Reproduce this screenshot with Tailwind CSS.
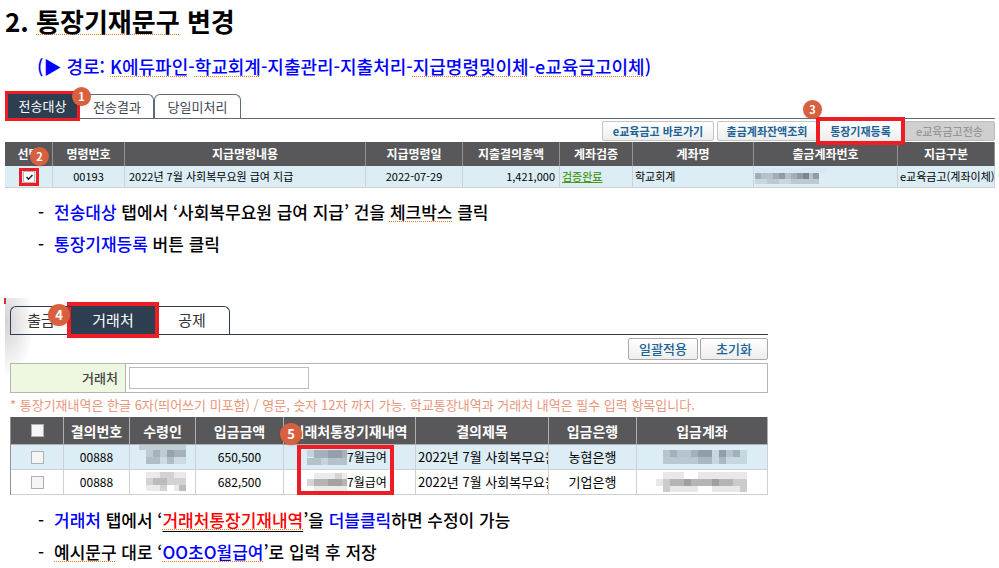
<!DOCTYPE html>
<html lang="ko">
<head>
  <meta charset="UTF-8">
  <meta name="viewport" content="width=device-width, initial-scale=1">
  <title>통장기재문구 변경</title>
  <script src="https://cdn.jsdelivr.net/npm/@tailwindcss/browser@4"></script>
</head>
<body class="bg-white text-black font-['Noto_Sans_CJK_KR','Liberation_Sans',sans-serif]">
  <main class="pl-[5px] pr-1">
    <h1 class="text-[26px] leading-[42px] font-bold">2. <span class="underline decoration-dotted decoration-1 underline-offset-2 decoration-[#e87722] [text-decoration-skip-ink:none]">통장기재문구</span> 변경</h1>
    <p class="pl-8 text-lg leading-[48px] font-medium text-[#0000ff] whitespace-nowrap">(▶ 경로: <span class="underline decoration-dotted decoration-1 underline-offset-2 decoration-[#e87722] [text-decoration-skip-ink:none]">K에듀파인</span>-<span class="underline decoration-dotted decoration-1 underline-offset-2 decoration-[#e87722] [text-decoration-skip-ink:none]">학교회계</span>-지출관리-지출처리-<span class="underline decoration-dotted decoration-1 underline-offset-2 decoration-[#e87722] [text-decoration-skip-ink:none]">지급명령및이체</span>-<span class="underline decoration-dotted decoration-1 underline-offset-2 decoration-[#e87722] [text-decoration-skip-ink:none]">e교육금고이체</span>)</p>

    <!-- Transfer target -->
    <section>
      <nav class="flex pt-1 pl-[3px] border-b border-[#5b6b7b] text-[13px] text-[#3f4650]">
        <button class="relative z-10 w-[69px] h-6 bg-[#2c3e50] text-white outline-3 outline-[#ee1c25]">전송대상
          <span class="absolute -top-[7px] -right-[14px] flex items-center justify-center size-[19px] rounded-full bg-[#d9603f] shadow text-[11px] font-bold text-white">1</span>
        </button>
        <button class="w-[77px] h-6 pl-1 border-t border-r border-[#5b6b7b] rounded-tr-md">전송결과</button>
        <button class="w-[87px] h-6 border-t border-x border-[#5b6b7b] rounded-t-md">당일미처리</button>
      </nav>

      <div class="flex justify-end gap-[3px] pt-0.5 pb-px text-[11px] font-bold text-[#1b6396] whitespace-nowrap">
        <button class="w-[112px] h-5 border border-[#c4c4c4] rounded-xs bg-linear-to-b from-white to-[#ededed]">e교육금고 바로가기</button>
        <button class="w-[100px] h-5 border border-[#c4c4c4] rounded-xs bg-linear-to-b from-white to-[#ededed]">출금계좌잔액조회</button>
        <button class="relative z-10 w-[81px] h-5 bg-linear-to-b from-white to-[#ededed] outline-4 outline-[#ee1c25]">통장기재등록
          <span class="absolute -top-[21px] -left-[17px] flex items-center justify-center size-[19px] rounded-full bg-[#d9603f] shadow text-[11px] font-bold text-white">3</span>
        </button>
        <button disabled class="w-[91px] h-5 border border-[#bdbdbd] rounded-xs bg-[#cfcfcf] font-medium text-[#969696]">e교육금고전송</button>
      </div>

      <table class="w-full table-fixed border-separate border-spacing-0 text-[11px] whitespace-nowrap">
        <colgroup>
          <col class="w-12"><col class="w-[72px]"><col><col class="w-[97px]"><col class="w-[97px]"><col class="w-[73px]"><col class="w-[121px]"><col class="w-36"><col class="w-[97px]">
        </colgroup>
        <thead class="bg-[#58585a] text-xs text-white">
          <tr class="h-6">
            <th class="relative border-r border-[#929294]">선택
              <span class="absolute top-[5px] right-[3px] flex items-center justify-center size-[19px] rounded-full bg-[#d9603f] shadow text-[11px] font-bold text-white">2</span>
            </th>
            <th class="border-r border-[#929294]">명령번호</th>
            <th class="border-r border-[#929294]">지급명령내용</th>
            <th class="border-r border-[#929294]">지급명령일</th>
            <th class="border-r border-[#929294]">지출결의총액</th>
            <th class="border-r border-[#929294]">계좌검증</th>
            <th class="border-r border-[#929294]">계좌명</th>
            <th class="border-r border-[#929294]">출금계좌번호</th>
            <th class="border-r border-[#929294]">지급구분</th>
          </tr>
        </thead>
        <tbody class="bg-[#dcedf6]">
          <tr class="h-[22px]">
            <td class="border-r border-b border-[#cfd0d6]">
              <label class="relative block w-5 h-[18px] mx-auto border-3 border-[#ee1c25] bg-[#dcedf6]">
                <input type="checkbox" checked aria-label="선택" class="block appearance-none size-3 mx-auto bg-white border border-[#b5b5b5]">
                <svg class="absolute top-[3px] left-[4px]" width="7" height="7" viewBox="0 0 7 7" fill="none" stroke="#222" stroke-width="1.5"><path d="M0.5 3 L2.5 5.2 L6.5 1"/></svg>
              </label>
            </td>
            <td class="border-r border-b border-[#cfd0d6] text-center">00193</td>
            <td class="border-r border-b border-[#cfd0d6] pl-1">2022년 7월 사회복무요원 급여 지급</td>
            <td class="border-r border-b border-[#cfd0d6] text-center">2022-07-29</td>
            <td class="border-r border-b border-[#cfd0d6] pr-1 text-right">1,421,000</td>
            <td class="border-r border-b border-[#cfd0d6] pl-0.5"><a href="#" class="font-medium text-[#4b9a1e] underline">검증완료</a></td>
            <td class="border-r border-b border-[#cfd0d6] pl-0.5">학교회계</td>
            <td class="border-r border-b border-[#cfd0d6] pl-px">
              <svg width="72" height="17" class="block" shape-rendering="crispEdges">
                <path fill="#d8e8f2" d="M0 0h72v5h-72z"/>
                <path fill="#a3adb5" d="M0 5h6v6h-6zM18 5h6v6h-6zM36 5h6v6h-6z"/>
                <path fill="#b5c1ca" d="M6 5h12v6h-12zM30 5h6v6h-6zM54 5h4v6h-4z"/>
                <path fill="#929ba3" d="M24 5h6v6h-6zM42 5h6v6h-6zM58 5h6v6h-6z"/>
                <path fill="#7c868f" d="M48 5h6v6h-6z"/>
                <path fill="#cbd7df" d="M0 11h12v5h-12zM24 11h12v5h-12z"/>
                <path fill="#bcc9d2" d="M12 11h12v5h-12zM36 11h28v5h-28z"/>
              </svg>
            </td>
            <td class="border-r border-b border-[#cfd0d6] pl-0.5 overflow-hidden">e교육금고(계좌이체)</td>
          </tr>
        </tbody>
      </table>
    </section>

    <ul class="pt-2 pl-[33px] text-[17px] leading-8 font-medium">
      <li class="flex"><span class="w-4">-</span><p><span class="text-[#0000ff]">전송대상</span> 탭에서 ‘사회복무요원 급여 지급’ 건을 <span class="underline decoration-dotted decoration-1 underline-offset-2 decoration-[#e87722] [text-decoration-skip-ink:none]">체크박스</span> 클릭</p></li>
      <li class="flex"><span class="w-4">-</span><p><span class="text-[#0000ff]">통장기재등록</span> 버튼 클릭</p></li>
    </ul>

    <!-- Payee -->
    <section class="relative mt-[38px] pt-2 pl-[5px] max-w-[763px] bg-[radial-gradient(ellipse_30px_56px_at_0px_24px,#d2d2d2,transparent)]">
      <span class="absolute top-0 -left-px w-0.5 h-1.5 bg-[#d9302c]"></span>
      <nav class="flex border-b border-[#2c3e50] text-[15px] text-[#333]">
        <button class="relative z-20 w-[61px] h-7 border-t border-l border-[#2c3e50] rounded-tl-md">출금
          <span class="absolute -top-[3px] right-[1px] flex items-center justify-center size-[22px] rounded-full bg-[#d9603f] shadow text-[13px] font-bold text-white">4</span>
        </button>
        <button class="relative z-10 w-[84px] h-7 bg-[#2c3e50] text-white outline-4 outline-[#ee1c25]">거래처</button>
        <button class="w-[75px] h-7 border-t border-r border-[#2c3e50] rounded-tr-md">공제</button>
      </nav>

      <div class="flex justify-end gap-0.5 pt-[3px] text-[13px] font-medium text-[#1b6396]">
        <button class="w-[70px] h-[22px] border border-[#a9a9a9] rounded-xs bg-linear-to-b from-white to-[#ededed]">일괄적용</button>
        <button class="w-[68px] h-[22px] border border-[#a9a9a9] rounded-xs bg-linear-to-b from-white to-[#ededed]">초기화</button>
      </div>

      <div class="flex mt-[3px] h-[30px] border border-[#b4b4b4]">
        <label for="payee" class="flex items-center justify-end w-[115px] pr-[7px] border-r border-[#b4b4b4] bg-[#eef7e0] text-[13px] font-medium text-[#444]">거래처</label>
        <input id="payee" type="text" class="w-[180px] h-[22px] mt-[3px] ml-[3px] bg-white border border-[#bdbdbd] text-[13px]">
      </div>

      <p class="text-[13px] leading-6 text-[#e8967c] whitespace-nowrap">* 통장기재내역은 한글 6자(띄어쓰기 미포함) / 영문, 숫자 12자 까지 가능. 학교통장내역과 거래처 내역은 필수 입력 항목입니다.</p>

      <table class="w-full table-fixed border-separate border-spacing-0 border-l border-[#929294] text-[13px] whitespace-nowrap">
        <colgroup>
          <col class="w-[53px]"><col class="w-[66px]"><col class="w-[66px]"><col class="w-[88px]"><col class="w-[132px]"><col><col class="w-[88px]"><col class="w-[131px]">
        </colgroup>
        <thead class="bg-[#58585a] text-sm leading-5 text-white">
          <tr class="h-7">
            <th class="border-r border-b border-[#b0b0b2]"><input type="checkbox" aria-label="전체 선택" class="block appearance-none size-[13px] mx-auto bg-[#f5f5f5] border border-[#b0b0b0]"></th>
            <th class="border-r border-b border-[#b0b0b2]">결의번호</th>
            <th class="border-r border-b border-[#b0b0b2]">수령인</th>
            <th class="border-r border-b border-[#b0b0b2]">입금금액</th>
            <th class="relative border-r border-b border-[#b0b0b2]">거래처통장기재내역
              <span class="absolute top-[6px] -left-[4px] flex items-center justify-center size-[22px] rounded-full bg-[#d9603f] shadow text-[13px] font-bold text-white">5</span>
            </th>
            <th class="border-r border-b border-[#b0b0b2]">결의제목</th>
            <th class="border-r border-b border-[#b0b0b2]">입금은행</th>
            <th class="border-r border-b border-[#b0b0b2]">입금계좌</th>
          </tr>
        </thead>
        <tbody>
          <tr class="h-[25px] bg-[#dcedf6]">
            <td class="border-r border-b border-[#cfd0d6]"><input type="checkbox" aria-label="선택" class="block appearance-none size-[13px] mx-auto bg-[#f5f5f5] border border-[#b0b0b0]"></td>
            <td class="border-r border-b border-[#cfd0d6] text-center text-xs">00888</td>
            <td class="border-r border-b border-[#cfd0d6]">
              <svg width="47" height="24" class="block mx-auto" shape-rendering="crispEdges">
                <path fill="#c1cdd5" d="M0 0h47v5h-47z"/>
                <path fill="#bdcbd5" d="M7 5h7v7h-7zM21 5h7v7h-7z"/>
                <path fill="#a5b2bc" d="M14 5h7v7h-7zM35 5h12v7h-12z"/>
                <path fill="#96a3ad" d="M28 5h7v7h-7z"/>
                <path fill="#b0bdc7" d="M7 12h14v7h-14zM28 12h7v7h-7z"/>
                <path fill="#cbdae4" d="M21 12h7v7h-7zM35 12h12v7h-12z"/>
              </svg>
            </td>
            <td class="border-r border-b border-[#cfd0d6] text-center text-xs">650,500</td>
            <td class="relative border-r border-b border-[#cfd0d6] pl-[23px]">
              <div class="flex items-center text-xs">
                <svg width="40" height="15" shape-rendering="crispEdges">
                  <path fill="#c4d3dd" d="M0 0h7v7h-7zM14 8h7v7h-7z"/>
                  <path fill="#a5b1ba" d="M7 0h14v8h-14zM35 0h5v8h-5z"/>
                  <path fill="#939fa9" d="M21 0h14v8h-14z"/>
                  <path fill="#b4c2cc" d="M0 8h14v7h-14zM21 8h19v7h-19z"/>
                </svg>7월급여
              </div>
              <span class="absolute top-0 left-[13px] w-[97px] h-[50px] border-4 border-[#ee1c25]"></span>
            </td>
            <td class="border-r border-b border-[#cfd0d6] pl-0.5 overflow-hidden">2022년 7월 사회복무요원</td>
            <td class="border-r border-b border-[#cfd0d6] text-center">농협은행</td>
            <td class="border-r border-b border-[#cfd0d6]">
              <svg width="92" height="15" class="block mx-auto" shape-rendering="crispEdges">
                <path fill="#b4c3cd" d="M7 0h7v7h-7zM21 0h14v7h-14zM70 0h7v7h-7z"/>
                <path fill="#a2b0ba" d="M14 0h7v7h-7zM35 0h7v7h-7zM77 0h7v7h-7z"/>
                <path fill="#919daa" d="M42 0h14v7h-14zM63 0h7v7h-7z"/>
                <path fill="#c7d7e1" d="M56 0h7v7h-7zM84 0h7v7h-7zM56 7h7v7h-7zM70 7h21v7h-21z"/>
                <path fill="#b9c9d3" d="M7 7h35v7h-35z"/>
                <path fill="#a8b7c1" d="M42 7h14v7h-14zM63 7h7v7h-7z"/>
              </svg>
            </td>
          </tr>
          <tr class="h-[25px]">
            <td class="border-r border-b border-[#cfd0d6]"><input type="checkbox" aria-label="선택" class="block appearance-none size-[13px] mx-auto bg-[#f5f5f5] border border-[#b0b0b0]"></td>
            <td class="border-r border-b border-[#cfd0d6] text-center text-xs">00888</td>
            <td class="border-r border-b border-[#cfd0d6]">
              <svg width="47" height="20" class="block mx-auto" shape-rendering="crispEdges">
                <path fill="#eaeaea" d="M7 0h14v6h-14zM35 0h12v6h-12zM7 13h14v6h-14zM35 13h5v6h-5z"/>
                <path fill="#d2d2d2" d="M21 0h14v6h-14zM7 6h7v7h-7zM28 6h19v7h-19zM21 13h7v6h-7z"/>
                <path fill="#bcbcbc" d="M14 6h14v7h-14zM40 13h7v6h-7z"/>
              </svg>
            </td>
            <td class="border-r border-b border-[#cfd0d6] text-center text-xs">682,500</td>
            <td class="border-r border-b border-[#cfd0d6] pl-[23px]">
              <div class="flex items-center text-xs">
                <svg width="40" height="19" shape-rendering="crispEdges">
                  <path fill="#ebebeb" d="M7 0h33v6h-33zM7 13h33v5h-33z"/>
                  <path fill="#d4d4d4" d="M0 6h7v7h-7zM28 0h7v6h-7z"/>
                  <path fill="#b4b4b4" d="M7 6h14v7h-14zM35 6h5v7h-5z"/>
                  <path fill="#a3a3a3" d="M21 6h14v7h-14z"/>
                </svg>7월급여
              </div>
            </td>
            <td class="border-r border-b border-[#cfd0d6] pl-0.5 overflow-hidden">2022년 7월 사회복무요원</td>
            <td class="border-r border-b border-[#cfd0d6] text-center">기업은행</td>
            <td class="border-r border-b border-[#cfd0d6]">
              <svg width="92" height="20" class="block mx-auto" shape-rendering="crispEdges">
                <path fill="#e8e8e8" d="M0 7h7v7h-7zM7 0h21v7h-21zM42 0h49v7h-49zM14 14h28v6h-28zM56 14h28v6h-28z"/>
                <path fill="#cbcbcb" d="M7 7h7v7h-7zM77 7h14v7h-14zM7 14h7v6h-7zM84 14h7v6h-7z"/>
                <path fill="#b5b5b5" d="M14 7h14v7h-14zM35 7h21v7h-21zM63 7h14v7h-14z"/>
                <path fill="#a0a0a0" d="M28 7h7v7h-7zM56 7h7v7h-7z"/>
              </svg>
            </td>
          </tr>
        </tbody>
      </table>
    </section>

    <ul class="pt-[9px] pl-[33px] text-[17px] leading-8 font-medium">
      <li class="flex"><span class="w-4">-</span><p><span class="text-[#0000ff]">거래처</span> 탭에서 ‘<span class="text-[#ff0000] underline decoration-1 underline-offset-4 decoration-black [text-decoration-skip-ink:none]"><span class="underline decoration-dotted decoration-1 underline-offset-2 decoration-[#e87722] [text-decoration-skip-ink:none]">거래처통장기재내역</span></span>’을 <span class="text-[#0000ff]">더블클릭</span>하면 수정이 가능</p></li>
      <li class="flex"><span class="w-4">-</span><p><span class="underline decoration-dotted decoration-1 underline-offset-2 decoration-[#e87722] [text-decoration-skip-ink:none]">예시문구</span> 대로 ‘<span class="text-[#0000ff] underline decoration-dotted decoration-1 underline-offset-2 decoration-[#e87722] [text-decoration-skip-ink:none]">OO초O월급여</span>’로 입력 후 저장</p></li>
    </ul>
  </main>
</body>
</html>
